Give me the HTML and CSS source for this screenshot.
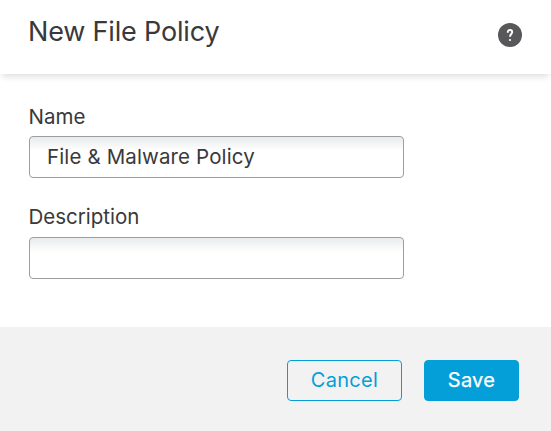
FILE: index.html
```html
<!DOCTYPE html>
<html lang="en">
<head>
<meta charset="utf-8">
<title>New File Policy</title>
<link rel="stylesheet" href="styles.css">
</head>
<body>
<form class="dialog">
  <header class="dialog-header">
    <h1 class="title">New File Policy</h1>
    <svg class="help" viewBox="0 0 24 24" role="img"><circle cx="12" cy="12" r="12"/><path d="M9.8 9.7V8.9c0-1.2.9-1.9 2.2-1.9s2.2.8 2.2 2.1c0 1.9-2.2 2-2.2 4.7"/><circle class="dot" cx="12" cy="17" r="1.1"/></svg>
  </header>
  <main class="dialog-body">
    <label class="label" for="name">Name</label>
    <input class="field" id="name" type="text" value="File &amp; Malware Policy">
    <label class="label" for="description">Description</label>
    <input class="field" id="description" type="text">
  </main>
  <footer class="dialog-footer">
    <button class="button cancel" type="button">Cancel</button>
    <button class="button save" type="button">Save</button>
  </footer>
</form>
</body>
</html>
```
FILE: styles.css
```css
* { box-sizing: border-box; }
body { margin: 0; background: #fff; font-family: Inter, "Liberation Sans", sans-serif; color: #39393b; }
.dialog { display: flex; flex-direction: column; width: 551px; height: 431px; }
.dialog-header { display: flex; justify-content: space-between; height: 74px; padding: 15px 29px 0 28px; background: #fff; box-shadow: 0 5px 6px -2px rgba(0,0,0,.12); }
.title { margin: 0; font-size: 27px; line-height: 34px; font-weight: 400; letter-spacing: -.18px; }
.help { width: 24px; height: 24px; margin-top: 8px; fill: #58585b; }
.help path { fill: none; stroke: #fff; stroke-width: 1.9; }
.help .dot { fill: #fff; }
.dialog-body { display: flex; flex-direction: column; align-items: flex-start; height: 253px; padding: 30px 29px 0; }
.label { height: 32px; margin-left: -.5px; font-size: 20.5px; line-height: 26px; }
.field { width: 375px; height: 42px; margin: 0 0 27px; padding: 0 17px 2px; border: 1px solid #9e9ea2; border-radius: 4px; background: linear-gradient(#e9ebec, #fff 14px); font: 20.5px Inter, "Liberation Sans", sans-serif; letter-spacing: .13px; color: #39393b; }
.label + .field + .label { height: 33px; margin-top: -1px; }
.dialog-footer { display: flex; justify-content: flex-end; gap: 22px; height: 104px; padding: 33px 32px 0; background: #f2f2f2; }
.button { height: 41px; padding: 0 0 2px; border: 1px solid #049fd9; border-radius: 4px; font: 20px Inter, "Liberation Sans", sans-serif; letter-spacing: .3px; }
.cancel { width: 115px; color: #049fd9; background: transparent; }
.save { width: 95px; color: #fff; background: #049fd9; -webkit-text-stroke: .25px #fff; }
```
